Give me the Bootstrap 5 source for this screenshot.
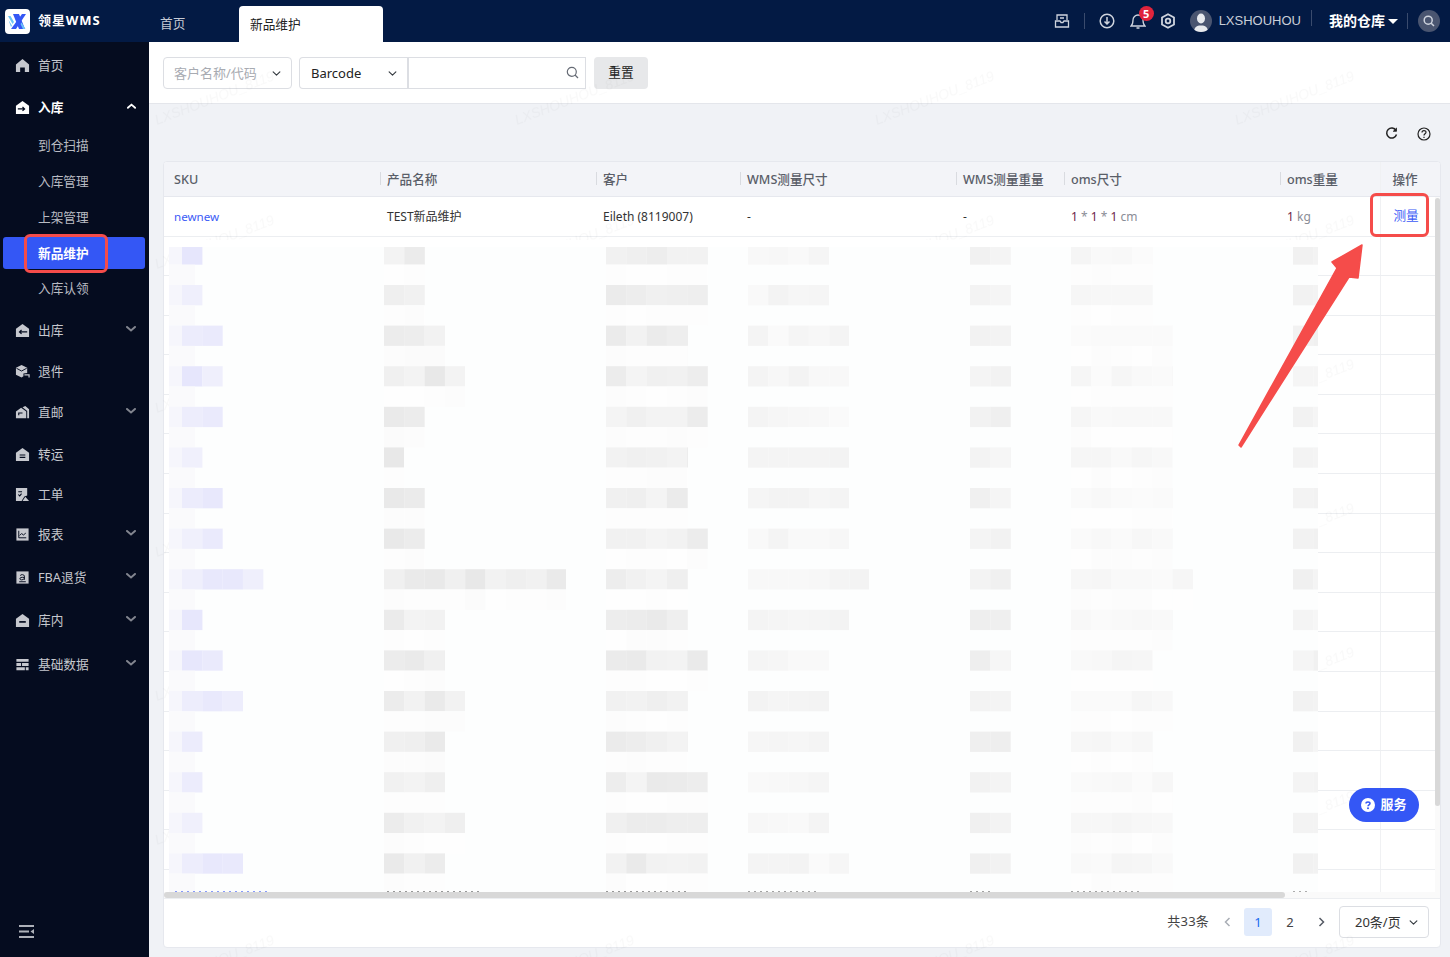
<!DOCTYPE html>
<html lang="zh-CN">
<head>
<meta charset="utf-8">
<title>新品维护</title>
<link href="https://cdn.jsdelivr.net/npm/bootstrap@5.3.0/dist/css/bootstrap.min.css" rel="stylesheet">
<style>
html,body{height:100%;overflow:hidden}
body{font-family:"Noto Sans","Noto Sans CJK SC",sans-serif;font-size:13px;background:#f0f2f6;color:#222}
.app-shell{height:957px;position:relative}
.side-panel{width:149px;flex:none;background:#050c1f;color:#c6c8ce;font-size:12.7px}
.brand-box{height:42px;background:#031a44;padding-left:5px;gap:8px}
.brand-logo{width:25px;height:25px;background:#fff;border-radius:4px;display:block}
.brand-name{color:#fff;font-weight:700;font-size:13px;letter-spacing:.9px;margin-top:-1px}
.side-nav{padding-top:2px}
.nav-row{display:flex;align-items:center;padding:1px 13px 0 15px;color:#c6c8ce;text-decoration:none;position:relative}
.nav-row svg.ico{width:15px;height:15px;flex:none;margin:-1px 8px 0 0;fill:currentColor}
.nav-row .chev{margin-left:auto;margin-top:-4px;color:#82858f}
.h40{height:40px}.h41{height:41px}.h42{height:42px}.h43{height:43px}.h44{height:44px}
.nav-open{color:#fff;font-weight:700}
.nav-row.nav-open .chev{color:#fff;width:9px}
.sub-list{margin:1px 0 5px;display:flex;flex-direction:column;gap:4px}
.sub-row{display:flex;align-items:center;height:32px;margin:0 4px 0 3px;padding:1px 0 0 35px;border-radius:3px;color:#b9bbc2;text-decoration:none}
.sub-row.on{background:#3457f5;color:#fff;font-weight:700}
.sub-last{margin-top:-1px}
.fold-btn{position:absolute;left:19px;bottom:18px;line-height:0}
.top-strip{height:42px;background:#031a44;color:#cfd4de;flex:none;font-size:12.7px}
.tab-plain{margin-left:11px;width:79px;color:#c6cad4;padding-top:5px}
.tab-on{width:144px;height:36px;margin-top:6px;background:#fff;border-radius:4px 4px 0 0;padding:1px 0 0 11px;color:#222;display:flex;align-items:center;align-self:flex-start}
.top-tools{margin-left:auto;padding-right:10px;gap:0}
.top-sep{width:1px;height:16px;background:#3a4b6d}
.notice-wrap{position:relative;line-height:0}
.notice-num{position:absolute;left:9px;top:-7px;width:15px;height:15px;border-radius:50%;background:#e0243c;color:#fff;font-size:11px;line-height:15px;text-align:center;padding:0}
.user-mark{width:22px;height:22px;border-radius:50%;background:#4a5570;overflow:hidden;display:block}
.user-text{color:#c9ced8;font-size:13px;font-family:"Liberation Sans",sans-serif}
.store-text{color:#fff;font-weight:700;font-size:14px;margin-top:-2px}
.store-caret{width:0;height:0;border-left:5px solid transparent;border-right:5px solid transparent;border-top:5px solid #fff}
.find-round{width:22px;height:22px;border-radius:50%;background:#4a5570;display:flex;align-items:center;justify-content:center}
.filter-strip{height:62px;background:#fff;border-bottom:1px solid #e4e6eb;padding:15px 0 0 14px;gap:7px;flex:none}
.form-select.pick,.form-control.pick{height:32px;min-height:32px;font-size:13px;border:1px solid #dcdee3;border-radius:4px;padding:2px 0 0 10px;box-shadow:none;color:#222;background-size:11px 9px;background-position:right 9px center}
.pick-a{width:129px;flex:none}
.form-select.pick.pick-a{color:#a8abb2}
.pick-b{flex:none}
.form-select.pick.pick-b{width:110px;padding-left:11px;border-right-width:2px;flex:none}
.form-control.pick.pick-c{width:178px;flex:none;margin-left:0}
.find-group{width:288px;position:relative;flex-wrap:nowrap}
.find-ico{position:absolute;right:8px;top:9px;line-height:0;z-index:5}
.reset-btn{width:54px;height:32px;background:#e7e8ea;border:0;border-radius:4px;font-size:12.7px;padding:0;color:#222}
.tool-strip{height:57px;flex:none;padding:2px 19px 0 0;gap:19px}
.data-card{margin:0 9px 9px 14px;height:787px;background:#fff;border:1px solid #e6e8ee;border-radius:4px;overflow:hidden;flex:none}
.grid-wrap{height:736px;position:relative;overflow:hidden}
.data-grid{table-layout:fixed;width:1276px;margin:0;border-collapse:collapse;font-size:12px;color:#333}
.data-grid th{height:34px;background:#f3f4f8;color:#5a5e68;font-weight:500;font-size:12.6px;padding:3px 0 0 7px;border-bottom:1px solid #e6e8ee;position:relative;vertical-align:middle}
.data-grid th::before{content:"";position:absolute;left:0;top:10px;height:13px;width:1px;background:#d9dbe0}
.data-grid th:first-child{padding-left:10px}
.data-grid th:first-child::before,.data-grid th:last-child::before{display:none}
.data-grid td{height:39.6px;padding:2px 0 0 7px;border-bottom:1px solid #eceef1;vertical-align:middle;background:#fff}
.data-grid tbody tr:first-child td{height:40px}
.data-grid td:first-child{padding-left:10px}
.data-grid .act-col{padding-left:13px;box-shadow:-3px 0 4px -2px rgba(0,0,0,.08);position:relative}
.data-grid th.act-col{padding-left:12px}
.data-grid th.act-col,.data-grid td.act-col{border-left:1px solid #f0f1f3}
.sku-link,.act-link{color:#3c5bf6;text-decoration:none}
.sku-link{font-size:11.6px}
.act-link{font-size:12.6px;position:relative;top:-1px}
.num-mark{color:#6d1f4a}
.unit-mark{color:#8a8d96}
.mosaic-layer{position:absolute;left:5px;top:78px;width:1149px;height:652px;background:#fdfefe;display:block;z-index:16}
.hbar{position:absolute;left:0;bottom:0;width:1121px;height:6px;background:#d8d8d8;border-radius:3px;z-index:17}
.vbar{position:absolute;right:0;top:36px;width:5px;height:608px;background:#d8d8d8;border-radius:3px;z-index:17}
.hbar-gap{position:absolute;left:0;right:0;bottom:0;height:6px;background:#fafafa;z-index:17}
.vbar-gap{position:absolute;right:0;top:35px;bottom:0;width:5px;background:#fafafa;z-index:17}
.pager-strip{height:49px;padding:0 11px 2px 0;gap:0;border-top:1px solid #eceef1}
.pager-total{color:#444;margin-right:4px;letter-spacing:.2px}
.pager-strip .pagination{margin:0;align-items:center;--bs-pagination-border-width:0;--bs-pagination-bg:transparent;--bs-pagination-font-size:13px;--bs-pagination-color:#444;--bs-pagination-padding-x:0;--bs-pagination-padding-y:0}
.pager-strip .page-link{width:28px;height:28px;line-height:28px;text-align:center;border-radius:3px;display:flex;align-items:center;justify-content:center;margin:0}
.pager-strip .page-item{margin-right:4.500px}
.pager-strip .page-item:first-child{margin-right:4px}
.pager-strip .page-item:nth-child(2){margin-right:5px}
.pager-strip .page-item:nth-child(3){margin-right:4px}
.pager-strip .page-item:last-child{margin-right:4px}
.pager-strip .page-item.active .page-link{background:#e1ebfc;color:#1a6af0}
.form-select.pick.pick-size{width:90px;margin-left:0;padding-left:15px;color:#333}
.help-pill{position:absolute;left:1349px;top:788px;width:70px;height:34px;border-radius:17px;background:#3457f5;color:#fff;font-weight:700;font-size:13px;border:0;padding:0;gap:5px;z-index:20}
.mark-box{position:absolute;border:3px solid #f54c4a;border-radius:6px;z-index:30}
.mark-a{left:24px;top:234px;width:84px;height:39px}
.mark-b{left:1370px;top:193px;width:59px;height:44px}
.arrow-layer{position:absolute;left:1230px;top:238px;width:140px;height:215px;z-index:30}
.mark-layer{position:absolute;left:149px;top:42px;width:1301px;height:915px;z-index:15;pointer-events:none}
.mark-layer text{font-family:"Liberation Sans",sans-serif;font-size:14px;font-style:italic;fill:rgba(0,0,0,.022)}
</style>
</head>
<body>
<svg width="0" height="0" class="position-absolute">
  <symbol id="i-home" viewBox="0 0 16 16"><path d="M8 1 15 7v8h-4.500v-5h-5v5H1V7z"/></symbol>
  <symbol id="i-in" viewBox="0 0 16 16"><path d="M8 1 15 6v9H1V6z"/><path d="M3 9.500h7M8 7.500l2.200 2-2.200 2" fill="none" stroke="#050c1f" stroke-width="1.300"/></symbol>
  <symbol id="i-out" viewBox="0 0 16 16"><path d="M8 1 15 6v9H1V6z"/><path d="M13 9.500H5M7 7.500l-2.200 2 2.200 2" fill="none" stroke="#050c1f" stroke-width="1.300"/></symbol>
  <symbol id="i-back" viewBox="0 0 16 16"><path d="M7 1 13 4v5.500L9 10v3l-2 1.500L1 11.500V4z"/><path d="M1.500 4.500 7 7.500 12.500 4.500" fill="none" stroke="#050c1f"/><path d="M10 11.500h5v3" fill="none" stroke="currentColor" stroke-width="1.300"/></symbol>
  <symbol id="i-post" viewBox="0 0 16 16"><path d="M6.500 3 12 7v7H1V7z"/><path d="M8 2.500 11 1l4 3.500V14h-2V6.500z"/><path d="M4 11V8.500h4" fill="none" stroke="#050c1f" stroke-width="1.200"/></symbol>
  <symbol id="i-move" viewBox="0 0 16 16"><path d="M8 1 15 6v9H1V6z"/><path d="M5 8.500h6M5 11h6" fill="none" stroke="#050c1f" stroke-width="1.200"/></symbol>
  <symbol id="i-order" viewBox="0 0 16 16"><path d="M1 1h12v8l-3 1-3 5H1z"/><path d="M3.500 5h4M3.500 8l1.500 1.500 2-2.500" fill="none" stroke="#050c1f" stroke-width="1.100"/><path d="M11 10.500 15 15H8z"/></symbol>
  <symbol id="i-chart" viewBox="0 0 16 16"><path d="M1.500 1.500h13v13h-13z"/><path d="M4 4v7.500h8M5 9l2-2 2 1.500 2.500-2" fill="none" stroke="#050c1f" stroke-width="1"/></symbol>
  <symbol id="i-fba" viewBox="0 0 16 16"><path d="M1.500 1.500h13v13h-13z"/><path d="M5.500 6c.5-1.500 4.500-1.500 4.500.500v4M10 8c-3-.5-5 0-4.800 1.500C5.500 11 8.500 11 10 9M4.500 12.500h7" fill="none" stroke="#050c1f" stroke-width="1"/></symbol>
  <symbol id="i-stock" viewBox="0 0 16 16"><path d="M8 1 15 6v9H1V6z"/><path d="M4.500 9.500h7" fill="none" stroke="#050c1f" stroke-width="1.800"/></symbol>
  <symbol id="i-base" viewBox="0 0 16 16"><path d="M1.500 2h13v3h-13zM1.500 6.500h5v3h-5zM7.500 6.500h7v3h-7zM1.500 11h9v3h-9zM11.500 11h3v3h-3z"/></symbol>
  <symbol id="i-chev" viewBox="0 0 10 6"><path d="M1 1l4 3.500L9 1" fill="none" stroke="currentColor" stroke-width="2" stroke-linecap="round"/></symbol>
</svg>

<div class="app-shell d-flex">
  <aside class="side-panel d-flex flex-column position-relative">
    <div class="brand-box d-flex align-items-center">
      <svg class="brand-logo" viewBox="0 0 25 25">
        <path d="M8 5h6l6 15h-6z" fill="#3457f5"/>
        <path d="M21 5h-4L6 20h5z" fill="#3457f5"/>
        <path d="M3 7h2.500l3.500 6-1.500 2zM3.500 11l3.500 5.500-1 1.500zM15.500 15l1-1.500 4 6.500H18z" fill="#6cc4f8"/>
      </svg>
      <span class="brand-name">领星WMS</span>
    </div>
    <nav class="side-nav">
      <a class="nav-row h42" href="#"><svg class="ico"><use href="#i-home"/></svg>首页</a>
      <a class="nav-row h42 nav-open" href="#"><svg class="ico"><use href="#i-in"/></svg>入库<svg class="chev" width="10" height="6" style="transform:rotate(180deg)"><use href="#i-chev"/></svg></a>
      <div class="sub-list">
        <a class="sub-row" href="#">到仓扫描</a>
        <a class="sub-row" href="#">入库管理</a>
        <a class="sub-row" href="#">上架管理</a>
        <a class="sub-row on" href="#">新品维护</a>
        <a class="sub-row sub-last" href="#">入库认领</a>
      </div>
      <a class="nav-row h42" href="#"><svg class="ico"><use href="#i-out"/></svg>出库<svg class="chev" width="10" height="6"><use href="#i-chev"/></svg></a>
      <a class="nav-row h40" href="#"><svg class="ico"><use href="#i-back"/></svg>退件</a>
      <a class="nav-row h43" href="#"><svg class="ico"><use href="#i-post"/></svg>直邮<svg class="chev" width="10" height="6"><use href="#i-chev"/></svg></a>
      <a class="nav-row h40" href="#"><svg class="ico"><use href="#i-move"/></svg>转运</a>
      <a class="nav-row h40" href="#"><svg class="ico"><use href="#i-order"/></svg>工单</a>
      <a class="nav-row h41" href="#"><svg class="ico"><use href="#i-chart"/></svg>报表<svg class="chev" width="10" height="6"><use href="#i-chev"/></svg></a>
      <a class="nav-row h44" href="#"><svg class="ico"><use href="#i-fba"/></svg>FBA退货<svg class="chev" width="10" height="6"><use href="#i-chev"/></svg></a>
      <a class="nav-row h43" href="#"><svg class="ico"><use href="#i-stock"/></svg>库内<svg class="chev" width="10" height="6"><use href="#i-chev"/></svg></a>
      <a class="nav-row h44" href="#"><svg class="ico"><use href="#i-base"/></svg>基础数据<svg class="chev" width="10" height="6"><use href="#i-chev"/></svg></a>
    </nav>
    <div class="fold-btn">
      <svg width="15" height="15" viewBox="0 0 15 15"><path d="M0 2h15M0 7.500h10M0 13h15" stroke="#aeb1b9" stroke-width="2"/><path d="M15 5v5l-3.500-2.500z" fill="#aeb1b9"/></svg>
    </div>
  </aside>

  <main class="flex-grow-1 d-flex flex-column" style="min-width:0">
    <header class="top-strip d-flex align-items-center">
      <div class="tab-plain">首页</div>
      <div class="tab-on">新品维护</div>
      <div class="top-tools d-flex align-items-center">
        <svg width="16" height="16" viewBox="0 0 16 16" fill="none" stroke="#cfd4de" stroke-width="1.300"><path d="M3 7V2h10v5M1.500 8H6l1 1.500h2L10 8h4.500v6h-13zM6 5h4"/></svg>
        <span class="top-sep" style="margin:0 14px"></span>
        <svg width="16" height="16" viewBox="0 0 16 16" fill="none" stroke="#cfd4de" stroke-width="1.500"><circle cx="8" cy="8" r="6.800"/><path d="M8 4v7M5.500 8.500 8 11l2.500-2.500"/></svg>
        <span class="notice-wrap" style="margin-left:15px">
          <svg width="16" height="16" viewBox="0 0 16 16" fill="none" stroke="#cfd4de" stroke-width="1.300"><path d="M1 13c2-1.500 2-3 2-6a5 5 0 0 1 10 0c0 3 0 4.500 2 6zM6.500 15h3"/></svg>
          <span class="notice-num badge">5</span>
        </span>
        <svg style="margin-left:14px" width="16" height="16" viewBox="0 0 16 16" fill="none" stroke="#cfd4de" stroke-width="1.800"><path d="M8 1.200 14 4.500v7L8 14.800 2 11.500v-7z"/><circle cx="8" cy="8" r="2.300"/></svg>
        <svg class="user-mark" style="margin-left:14px" viewBox="0 0 22 22"><ellipse cx="11" cy="8.500" rx="4" ry="5" fill="#e8eaee"/><path d="M4 22c0-5 3-6 5-6.500h4c2 .5 5 1.500 5 6.500z" fill="#e8eaee"/></svg>
        <span class="user-text" style="margin-left:7px">LXSHOUHOU</span>
        <span class="top-sep" style="margin:-6px 17px 0 10px"></span>
        <span class="store-text">我的仓库</span>
        <span class="store-caret" style="margin-left:3px"></span>
        <span class="top-sep" style="margin:0 10px 0 9px"></span>
        <span class="find-round"><svg width="12" height="12" viewBox="0 0 12 12" fill="none" stroke="#cfd4de" stroke-width="1.500"><circle cx="5.200" cy="5.200" r="4"/><path d="M8.200 8.200 11 11"/></svg></span>
      </div>
    </header>

    <section class="filter-strip d-flex align-items-start">
      <select class="form-select pick pick-a"><option>客户名称/代码</option></select>
      <div class="input-group find-group">
        <select class="form-select pick pick-b"><option>Barcode</option></select>
        <input class="form-control pick pick-c" type="text">
        <span class="find-ico"><svg width="13" height="13" viewBox="0 0 13 13" fill="none" stroke="#666b75" stroke-width="1.200"><circle cx="5.800" cy="5.800" r="4.500"/><path d="M9 9l3 3"/></svg></span>
      </div>
      <button class="btn reset-btn" type="button">重置</button>
    </section>

    <div class="tool-strip d-flex align-items-center justify-content-end">
      <svg width="13" height="13" viewBox="0 0 13 13" fill="none" stroke="#222" stroke-width="1.500"><path d="M11 3.500A5 5 0 1 0 11.500 7.500"/><path d="M11.500 .8v3.500H8" fill="#222" stroke-width=".8"/></svg>
      <svg width="14" height="14" viewBox="0 0 14 14" fill="none" stroke="#222" stroke-width="1.200"><circle cx="7" cy="7" r="6"/><path d="M5 5.500C5 3 9 3 9 5.300 9 6.800 7 6.800 7 8.500M7 9.800v1.200"/></svg>
    </div>

    <section class="data-card">
      <div class="grid-wrap">
        <table class="data-grid table">
          <colgroup><col style="width:216px"><col style="width:216px"><col style="width:144px"><col style="width:216px"><col style="width:108px"><col style="width:216px"><col style="width:100px"><col style="width:60px"></colgroup>
          <thead><tr><th>SKU</th><th>产品名称</th><th>客户</th><th>WMS测量尺寸</th><th>WMS测量重量</th><th>oms尺寸</th><th>oms重量</th><th class="act-col">操作</th></tr></thead>
          <tbody id="gridBody">
            <tr>
              <td><a class="sku-link" href="#">newnew</a></td>
              <td>TEST新品维护</td>
              <td>Eileth (8119007)</td>
              <td>-</td>
              <td>-</td>
              <td><span class="num-mark">1</span> <span class="unit-mark">*</span> <span class="num-mark">1</span> <span class="unit-mark">*</span> <span class="num-mark">1</span> <span class="unit-mark">cm</span></td>
              <td><span class="num-mark">1</span> <span class="unit-mark">kg</span></td>
              <td class="act-col"><a class="act-link" href="#">测量</a></td>
            </tr>
          </tbody>
        </table>
        <svg class="mosaic-layer" id="mosaic" viewBox="0 0 1149 652"></svg>
        <div class="hbar-gap"></div><div class="vbar-gap"></div>
        <div class="hbar"></div><div class="vbar"></div>
      </div>
      <div class="pager-strip d-flex align-items-center justify-content-end">
        <span class="pager-total">共33条</span>
        <ul class="pagination">
          <li class="page-item"><a class="page-link" href="#"><svg width="7" height="10" viewBox="0 0 7 10" fill="none" stroke="#a9adb5" stroke-width="1.500"><path d="M5.500 1 1.500 5l4 4"/></svg></a></li>
          <li class="page-item active"><a class="page-link" href="#">1</a></li>
          <li class="page-item"><a class="page-link" href="#">2</a></li>
          <li class="page-item"><a class="page-link" href="#"><svg width="7" height="10" viewBox="0 0 7 10" fill="none" stroke="#555a64" stroke-width="1.500"><path d="M1.500 1l4 4-4 4"/></svg></a></li>
        </ul>
        <select class="form-select pick pick-size"><option>20条/页</option></select>
      </div>
    </section>
  </main>

  <svg class="mark-layer"><defs><pattern id="wm" width="360" height="144" patternUnits="userSpaceOnUse" x="0" y="0"><text x="8" y="83" transform="rotate(-21 8 83)">LXSHOUHOU_8119</text></pattern></defs><rect width="1301" height="915" fill="url(#wm)"/></svg>

  <button class="btn help-pill d-flex align-items-center justify-content-center" type="button">
    <svg width="14" height="14" viewBox="0 0 14 14"><circle cx="7" cy="7" r="7" fill="#fff"/><path d="M5 5.500C5 3.500 9 3.500 9 5.500 9 7 7 6.800 7 8.300" fill="none" stroke="#3457f5" stroke-width="1.500"/><circle cx="7" cy="10.300" r="1" fill="#3457f5"/></svg>
    服务
  </button>
  <div class="mark-box mark-a"></div>
  <div class="mark-box mark-b"></div>
  <svg class="arrow-layer" viewBox="1230 238 140 215"><path d="M1239 445 1241 447 1349 277 1358 278 1362 245 1332 262 1337 268z" fill="#f54c4a" stroke="#f54c4a" stroke-width="1.500" stroke-linejoin="round"/></svg>
</div>

<script>
// table rows under the mosaic
var body=document.getElementById('gridBody');
for(var i=0;i<17;i++){var tr=document.createElement('tr');tr.innerHTML='<td></td><td></td><td></td><td></td><td></td><td></td><td></td><td class="act-col"></td>';body.appendChild(tr);}
// mosaic: [sku cells, product end, customer end, wms size end, oms size end]
var rows=[[1,41,102,81,82],[1,41,102,81,82],[2,61,82,101,102],[2,81,102,101,102],[2,41,102,101,102],[1,20,82,101,102],[2,41,82,101,102],[2,41,102,101,102],[4,182,82,121,122],[1,61,82,101,102],[2,61,102,81,82],[3,81,82,81,102],[1,61,82,81,82],[1,61,102,81,102],[1,81,102,81,102],[3,61,102,101,102]];
var svg=document.getElementById('mosaic'),html='',s=7;
function rnd(){s=(s*16807)%2147483647;return s/2147483647;}
function grey(b,v){var c=Math.round(b+rnd()*v);return 'rgb('+c+','+c+','+c+')';}
function rect(x,y,w,h,f){html+='<rect x="'+x+'" y="'+y+'" width="'+w+'" height="'+h+'" fill="'+f+'"/>';}
function run(x0,w,y,h,b,v){for(var x=0;x<w;x+=20.3){rect(x0+x,y,Math.min(20.4,w-x),h,grey(b,v));}}
var Y0=4.4,P=40.6;
rows.forEach(function(r,i){
  var y=Y0+i*P;
  rect(0,y,13,20.3,'#f6f6fc');
  for(var k=0;k<r[0];k++){var t=230+Math.round(rnd()*10);rect(13+k*20.3,y,20.4,20.3,'rgb('+t+','+t+',252)');}
  run(215,r[1],y,20.3,232,12);
  run(437,r[2],y,20.3,234,10);
  run(579,r[3],y,20.3,243,7);
  run(801,41,y,20.3,238,8);
  run(902,r[4],y,20.3,245,6);
  run(1124,25,y,20.3,240,6);
  // faint band between rows
  rect(0,y+20.3,26,20.3,'#fafafc');
  run(215,r[1],y+20.3,20.3,251,3);
  run(437,r[2],y+20.3,20.3,252,2);
  run(902,r[4],y+20.3,20.3,252,2);
});
rect(0,0,1149,7,'#ffffff');
// clipped next row of text at the very bottom
[[6,92,'#3c5bf6'],[218,92,'#555'],[437,80,'#555'],[579,70,'#666'],[801,24,'#666'],[902,70,'#666'],[1124,18,'#777']].forEach(function(c){
  html+='<path d="M'+c[0]+' 651.500h'+c[1]+'" stroke="'+c[2]+'" stroke-width="1" stroke-dasharray="2 4" opacity=".6"/>';
});
svg.innerHTML=html;
</script>
<script src="https://cdn.jsdelivr.net/npm/bootstrap@5.3.0/dist/js/bootstrap.bundle.min.js"></script>
</body>
</html>
